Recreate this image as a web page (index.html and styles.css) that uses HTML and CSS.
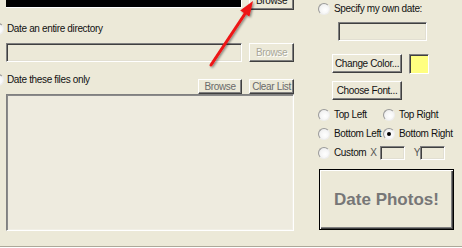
FILE: index.html
```html
<!DOCTYPE html>
<html>
<head>
<meta charset="utf-8">
<link rel="stylesheet" href="styles.css">
</head>
<body>
<div class="dialog">
  <div class="left">
    <div class="row top-row">
      <div class="preview"></div>
      <button class="btn btn-top">Browse</button>
    </div>
    <div class="radio-line dir-line">
      <span class="radio"></span><span>Date an entire directory</span>
    </div>
    <div class="row field-row">
      <div class="field dir-field"></div>
      <button class="btn disabled">Browse</button>
    </div>
    <div class="row files-row">
      <div class="radio-line">
        <span class="radio"></span><span>Date these files only</span>
      </div>
      <div class="small-btns">
        <button class="btn small grayish b1">Browse</button>
        <button class="btn small grayish b2">Clear List</button>
      </div>
    </div>
    <div class="listbox"></div>
  </div>
  <div class="right">
    <div class="radio-line r-line own">
      <span class="radio"></span><span>Specify my own date:</span>
    </div>
    <div class="field date-field"></div>
    <div class="row color-row">
      <button class="btn wide">Change Color...</button>
      <div class="swatch"></div>
    </div>
    <button class="btn wide font-btn">Choose Font...</button>
    <div class="pos-grid">
      <div class="radio-line r-line"><span class="radio"></span><span>Top Left</span></div>
      <div class="radio-line r-line"><span class="radio"></span><span>Top Right</span></div>
      <div class="radio-line r-line"><span class="radio"></span><span>Bottom Left</span></div>
      <div class="radio-line r-line"><span class="radio checked"></span><span>Bottom Right</span></div>
      <div class="custom-row">
        <div class="radio-line r-line"><span class="radio"></span><span>Custom</span></div>
        <span class="axis ax-x">X</span><div class="field small-field"></div>
        <span class="axis ax-y">Y</span><div class="field small-field"></div>
      </div>
    </div>
    <button class="btn big">Date Photos!</button>
  </div>
</div>
<div class="separator"></div>
<svg class="arrow" width="462" height="248" viewBox="0 0 462 248">
  <defs>
    <filter id="sh" x="-50%" y="-50%" width="200%" height="200%">
      <feDropShadow dx="1.2" dy="1.2" stdDeviation="1" flood-color="#000" flood-opacity="0.45"/>
    </filter>
  </defs>
  <g filter="url(#sh)">
    <line x1="211" y1="65" x2="245.5" y2="13" stroke="#ee1414" stroke-width="3" stroke-linecap="round"/>
    <polygon points="253,1 249.4,16.4 240.2,10.6" fill="#ee1414"/>
  </g>
</svg>
</body>
</html>
```

FILE: styles.css
```css
html, body {
  margin: 0;
  padding: 0;
  background: #ece9d8;
  overflow: hidden;
  width: 462px;
  height: 248px;
}
body {
  font-family: "Liberation Sans", Arial, sans-serif;
  font-size: 10px;
  letter-spacing: -0.35px;
  color: #111;
  position: relative;
}
.dialog {
  display: flex;
  align-items: flex-start;
  height: 231px;
}
.left {
  width: 288px;
  margin-left: 6px;
}
.right {
  margin-left: 24px;
  width: 140px;
  display: flex;
  flex-direction: column;
  align-items: flex-start;
}
.row {
  display: flex;
  align-items: flex-start;
}
.top-row {
  margin-top: -11px;
  gap: 7px;
}
.preview {
  width: 236px;
  height: 19px;
  box-sizing: border-box;
  background: #000;
  border-bottom: 1px solid #fff;
  border-right: 1px solid #fff;
}
.btn {
  font: inherit;
  letter-spacing: inherit;
  color: #111;
  background: #ece9d8;
  box-sizing: border-box;
  border: 1px solid;
  border-color: #fff #404040 #404040 #fff;
  box-shadow: inset -1px -1px #808080;
  padding: 0;
  margin: 0;
  height: 19px;
  width: 45px;
  text-align: center;
  line-height: 16px;
  white-space: nowrap;
}
.btn-top {
  margin-top: 2px;
}
.btn.disabled {
  color: #a8a698;
  text-shadow: 1px 1px #fff;
}
.radio-line {
  display: flex;
  align-items: center;
  height: 14px;
  gap: 3px;
  line-height: 14px;
  white-space: nowrap;
}
.radio {
  width: 12px;
  height: 12px;
  box-sizing: border-box;
  border-radius: 50%;
  border: 1px solid;
  border-color: #9a9a9a #eeeeee #eeeeee #9a9a9a;
  background: radial-gradient(circle at 60% 60%, #ffffff 0%, #f4f4f4 55%, #dcdcdc 100%);
  flex: none;
  display: flex;
  align-items: center;
  justify-content: center;
}
.radio.checked::after {
  content: "";
  width: 4px;
  height: 4px;
  border-radius: 50%;
  background: #000;
}
.dir-line {
  margin-left: -14px;
  margin-top: 12px;
}
.field {
  box-sizing: border-box;
  border: 1px solid;
  border-color: #808080 #fff #fff #808080;
  box-shadow: inset 1px 1px #404040, inset -1px -1px #e2dfd2;
  background: #ece9d8;
}
.field-row {
  margin-top: 7px;
  gap: 7px;
}
.dir-field {
  width: 236px;
  height: 19px;
}
.files-row {
  margin-top: 11px;
  height: 21px;
}
.files-row .radio-line {
  margin-left: -14px;
}
.small-btns {
  margin-left: auto;
  margin-top: 6px;
  display: flex;
  gap: 7px;
}
.btn.small {
  height: 15px;
  line-height: 12px;
}
.btn.b1 { width: 44px; }
.btn.grayish { color: #6a6a6a; }
.listbox {
  width: 288px;
  height: 137px;
  box-sizing: border-box;
  border: 1px solid;
  border-color: #808080 #fff #fff #808080;
  box-shadow: inset 1px 1px #8a8a8a, inset -1px -1px #f1efe6;
  background: #eeebdf;
}
.r-line {
  gap: 4px;
}
.own {
  margin-top: 2px;
}
.date-field {
  width: 89px;
  height: 19px;
  margin-left: 20px;
  margin-top: 6px;
}
.color-row {
  margin-top: 13px;
  margin-left: 14px;
  gap: 7px;
}
.btn.wide {
  width: 70px;
}
.swatch {
  width: 20px;
  height: 20px;
  box-sizing: border-box;
  background: #ffff80;
  border: 1px solid;
  border-color: #808080 #fff #fff #808080;
  box-shadow: inset 1px 1px #404040;
}
.font-btn {
  margin-top: 7px;
  margin-left: 14px;
}
.pos-grid {
  margin-top: 5px;
  display: grid;
  grid-template-columns: 65px auto;
  grid-auto-rows: 19px;
  align-items: center;
}
.custom-row {
  grid-column: 1 / 3;
  display: flex;
  align-items: center;
}
.axis {
  color: #555;
}
.ax-x { margin-left: 4px; margin-right: 3px; }
.ax-y { margin-left: 9px; margin-right: 0; }
.small-field {
  width: 25px;
  height: 14px;
}
.btn.big {
  margin-top: 7px;
  margin-left: 1px;
  width: 135px;
  height: 61px;
  border: 1px solid #000;
  box-shadow: inset 1px 1px #fff, inset -1px -1px #404040, inset -2px -2px #808080;
  font-family: "Liberation Sans", Arial, sans-serif;
  font-weight: bold;
  font-size: 17px;
  letter-spacing: 0;
  color: #777777;
  line-height: 58px;
}
.separator {
  margin-top: 15px;
  height: 1px;
  background: #aca899;
  border-bottom: 1px solid #fff;
}
.arrow {
  position: absolute;
  left: 0;
  top: 0;
  pointer-events: none;
}
```
